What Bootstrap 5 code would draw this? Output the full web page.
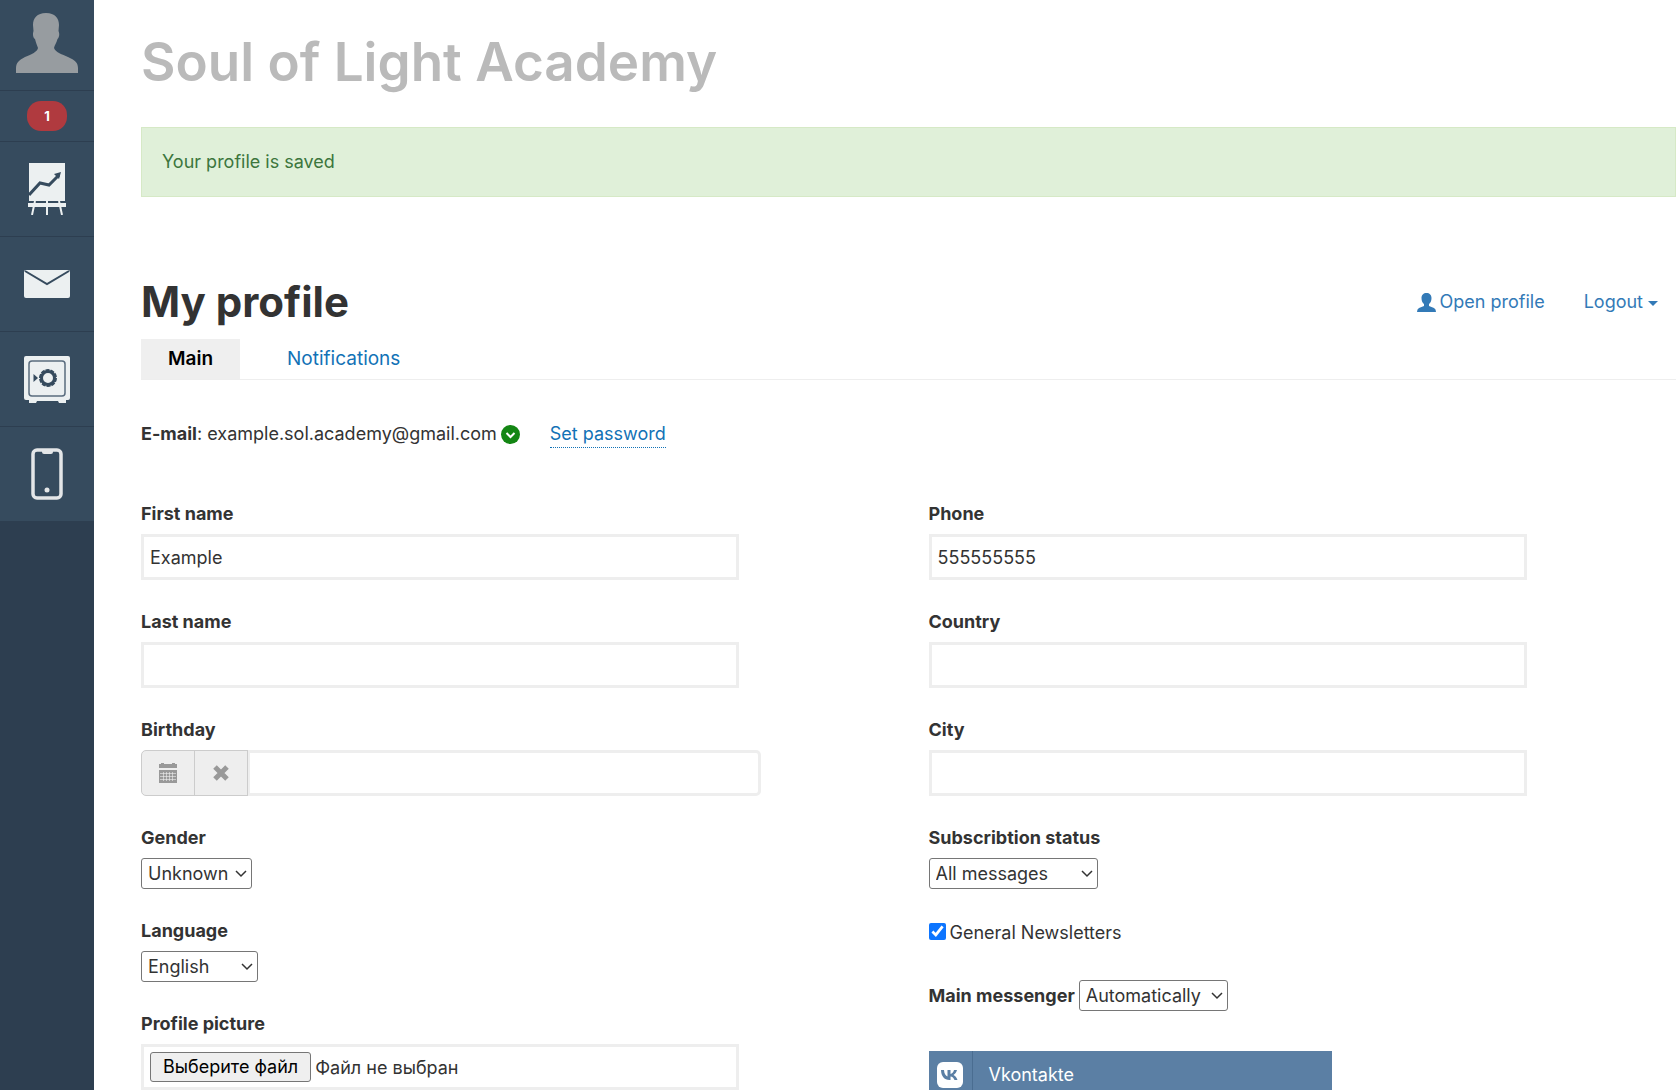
<!DOCTYPE html>
<html lang="en">
<head>
<meta charset="utf-8">
<meta name="viewport" content="width=device-width, initial-scale=1">
<title>My profile</title>
<link href="https://cdn.jsdelivr.net/npm/bootstrap@5.3.0/dist/css/bootstrap.min.css" rel="stylesheet">
<style>
body { font-family: Inter, "Open Sans", sans-serif; font-size: 18px; line-height: 28px; color: #333; }
a { text-decoration: none; color: #1272b6; }
.side { width: 94px; background: #2d3e50; }
.side-item { height: 95px; background: #364b5e; border-bottom: 1px solid #2d3e50; }
.side-avatar { height: 91px; padding-bottom: 4px; }
.side-count { height: 51px; }
.count-pill { width: 40px; height: 30px; border-radius: 14px; background: #b03a3f; font-size: 13px; }
.content-pane { padding: 0 4px 0 47px; overflow-x: hidden; overflow-y: auto; scrollbar-width: none; }
.brand { font-size: 53px; line-height: 66px; font-weight: 600; color: #bababa; margin: 29px 0 32px; }
.notice { background: #e0f0d9; border: 1px solid #d6e9c6; border-radius: 0; color: #3c763d; padding: 20px; margin-bottom: 75px; }
.page-title { font-size: 42px; line-height: 60px; font-weight: 700; }
.user-links { gap: 39px; padding-right: 18px; }
.user-links a { color: #337ab7; }
.user-links .dropdown-toggle::after { border-width: 5px 5px 0; margin-left: 5px; vertical-align: 2px; }
.profile-tabs { border-bottom: 1px solid #eee; margin-top: 7px; gap: 20px; }
.profile-tabs .nav-link { padding: 6px 27px; color: #1272b6; border-radius: 0; font-size: 19px; }
.profile-tabs .nav-link.active { background: #efefef; color: #000; font-weight: 600; }
.mail-line { margin: 40px 0 52px; }
.pass-link { border-bottom: 1px dotted #1272b6; margin-left: 30px; line-height: 26px; }
.fields { --bs-gutter-x: 40px; }
.field { margin-bottom: 28px; }
.cap { display: block; font-weight: 700; margin-bottom: 6px; }
.form-control { width: 80%; height: 46px; border: 3px solid #eee; border-radius: 0; padding: 6px; font-size: 18px; color: #333; }
.birth { width: 83%; }
.birth .form-control { width: auto; border-radius: 0 5px 5px 0; }
.birth .btn { width: 54px; padding: 0; border: 1px solid #ccc; background: #eee; color: #999; border-radius: 5px 0 0 5px; z-index: 6; }
.pick { appearance: none; height: 31px; border: 1px solid #767676; border-radius: 3px; color: #333; padding: 0 6px;
  background: #fff url("data:image/svg+xml,%3Csvg xmlns='http://www.w3.org/2000/svg' width='12' height='8'%3E%3Cpath d='M1 1l5 5 5-5' fill='none' stroke='%23333' stroke-width='1.500'/%3E%3C/svg%3E") no-repeat right 4px center; }
.pick-s { width: 111px; } .pick-m { width: 117px; } .pick-l { width: 169px; } .pick-a { width: 149px; }
.file-btn { height: 30px; border: 1px solid #767676; border-radius: 3px; background: #efefef; color: #000; font-size: 18px; line-height: 26px; padding: 0 12px; }
.tick { width: 17px; height: 17px; margin: 0 4px 4px 0; accent-color: #0d75ff; }
.news-row { padding-top: 2px; margin-bottom: 33px; }
.vk { width: 54%; height: 48px; background: #5b7fa4; color: #fff; }
.vk:hover { color: #fff; }
.vk-mark { width: 44px; border-right: 1px solid #4a6d91; }
</style>
<script src="https://cdn.jsdelivr.net/npm/bootstrap@5.3.0/dist/js/bootstrap.bundle.min.js"></script>
</head>
<body>
<div class="d-flex vh-100 overflow-hidden">
  <nav class="side flex-shrink-0 d-flex flex-column" aria-label="Sections">
    <a href="#" class="side-item side-avatar d-flex align-items-end justify-content-center" aria-label="Profile">
      <svg width="62" height="73" viewBox="0 0 62 73"><path fill="#979ca0" d="M30 0c9 0 13 5 13 12l-.5 6c1.500 3 .5 7-1 8-1 4-3 6-3.500 9 2 5 8 6 14 9 7 3 10 6 10 11v5H0v-5c0-5 3-8 9-11 7-3 12-5 13-9-1-3-2-5-3-9-2-1-2.500-5-1.500-8L17 12C17 5 21 0 30 0z"/></svg>
    </a>
    <a href="#" class="side-item side-count d-flex align-items-center justify-content-center"><span class="count-pill d-flex align-items-center justify-content-center text-white fw-bold">1</span></a>
    <a href="#" class="side-item d-flex align-items-center justify-content-center" aria-label="Training">
      <svg width="38" height="52" viewBox="0 0 38 52"><path fill="#ecf0f1" d="M1 0h36v38H1z"/><path fill="none" stroke="#364b5e" stroke-width="3" d="M1 32l11-12 9 2 10-10"/><path fill="#364b5e" d="M26 11l7-2-2 7z"/><path fill="#ecf0f1" d="M0 40h38v4H0z"/><path stroke="#364b5e" d="M0 39.500h38"/><path stroke="#ecf0f1" stroke-width="2" d="M7 38L4 52M19 38v14M31 38l3 14"/></svg>
    </a>
    <a href="#" class="side-item d-flex align-items-center justify-content-center" aria-label="Messages">
      <svg width="46" height="28" viewBox="0 0 46 28"><rect width="46" height="28" rx="2" fill="#ecf0f1"/><path fill="none" stroke="#364b5e" stroke-width="2" d="M1 1l22 13L45 1"/></svg>
    </a>
    <a href="#" class="side-item d-flex align-items-center justify-content-center" aria-label="Purchases">
      <svg width="46" height="47" viewBox="0 0 46 47"><path fill="#ecf0f1" d="M2 0h42q2 0 2 2v40q0 2-2 2h-2v3h-7l-1-2H13l-1 2H5v-3H2q-2 0-2-2V2q0-2 2-2z"/><rect x="5" y="5" width="36" height="35" rx="3" fill="none" stroke="#5a6c7e" stroke-width="1.500"/><circle cx="24" cy="22" r="6.500" fill="none" stroke="#364b5e" stroke-width="3"/><circle cx="24" cy="22" r="8" fill="none" stroke="#364b5e" stroke-width="2" stroke-dasharray="4 1"/><path fill="#364b5e" d="M9.500 18l4.500 4-4.500 4z"/></svg>
    </a>
    <a href="#" class="side-item d-flex align-items-center justify-content-center" aria-label="Mobile app">
      <svg width="32" height="52" viewBox="0 0 32 52"><rect x="2" y="2" width="28" height="48" rx="4" fill="none" stroke="#e4e6e8" stroke-width="3.500"/><path fill="#e4e6e8" d="M11 2h11v2q0 2-2 2h-7q-2 0-2-2z"/><circle cx="16" cy="42" r="2.500" fill="#e4e6e8"/></svg>
    </a>
  </nav>

  <main class="content-pane flex-grow-1">
    <h1 class="brand">Soul of Light Academy</h1>
    <div class="alert notice" role="status">Your profile is saved</div>

    <header class="d-flex justify-content-between align-items-center">
      <h2 class="page-title mb-0">My profile</h2>
      <div class="user-links d-flex">
        <a href="#" class="d-flex align-items-center gap-1"><svg width="19" height="19" viewBox="0 0 19 19" aria-hidden="true"><path fill="currentColor" d="M9.500 0c3 0 5 2 5 5s-1 5-2.500 6v2l5 2q2 1 2 4H0q0-3 2-4l5-2v-2C5.500 10 4.500 8 4.500 5s2-5 5-5z"/></svg>Open profile</a>
        <div class="dropdown">
          <a href="#" class="dropdown-toggle" data-bs-toggle="dropdown">Logout</a>
          <ul class="dropdown-menu dropdown-menu-end"></ul>
        </div>
      </div>
    </header>
    <nav class="nav profile-tabs">
      <a class="nav-link active" href="#">Main</a>
      <a class="nav-link" href="#">Notifications</a>
    </nav>

    <div class="mail-line d-flex align-items-center">
      <div><strong>E-mail</strong>: example.sol.academy@gmail.com</div>
      <svg class="ms-1" width="19" height="19" viewBox="0 0 19 19" aria-hidden="true"><circle cx="9.500" cy="9.500" r="9.500" fill="#138613"/><path d="M5.500 8l4 4 4-4" fill="none" stroke="#fff" stroke-width="2"/></svg>
      <a href="#" class="pass-link">Set password</a>
    </div>

    <form class="row fields">
      <div class="col-6">
        <div class="field"><label class="cap" for="first">First name</label><input class="form-control" id="first" value="Example"></div>
        <div class="field"><label class="cap" for="last">Last name</label><input class="form-control" id="last"></div>
        <div class="field">
          <label class="cap" for="birth">Birthday</label>
          <div class="input-group birth">
            <button type="button" class="btn" aria-label="Open calendar"><svg class="d-block mx-auto" width="18" height="20" viewBox="0 0 18 20"><path fill="currentColor" d="M0 1h2V0h3v1h8V0h3v1h2v4H0zM0 7h18v13H0z"/><path stroke="#eee" stroke-opacity=".6" d="M1 10.500h16M1 13.500h16M1 16.500h16M4.500 9v9M7.500 9v9M10.500 9v9M13.500 9v9"/></svg></button>
            <button type="button" class="btn" aria-label="Clear date"><svg class="d-block mx-auto" width="16" height="16" viewBox="0 0 16 16"><path stroke="currentColor" stroke-width="5" d="M2 2l12 12M14 2L2 14"/></svg></button>
            <input class="form-control" id="birth">
          </div>
        </div>
        <div class="field"><label class="cap" for="gender">Gender</label><select class="pick pick-s d-block" id="gender"><option>Unknown</option></select></div>
        <div class="field"><label class="cap" for="lang">Language</label><select class="pick pick-m d-block" id="lang"><option>English</option></select></div>
        <div class="field">
          <label class="cap" for="photo">Profile picture</label>
          <div class="form-control d-flex align-items-center">
            <button type="button" class="file-btn me-1" onclick="document.getElementById('photo').click()">Выберите файл</button>
            <span>Файл не выбран</span>
            <input type="file" id="photo" class="d-none">
          </div>
        </div>
      </div>
      <div class="col-6">
        <div class="field"><label class="cap" for="phone">Phone</label><input class="form-control" id="phone" value="555555555"></div>
        <div class="field"><label class="cap" for="country">Country</label><input class="form-control" id="country"></div>
        <div class="field"><label class="cap" for="city">City</label><input class="form-control" id="city"></div>
        <div class="field"><label class="cap" for="sub">Subscribtion status</label><select class="pick pick-l d-block" id="sub"><option>All messages</option></select></div>
        <div class="news-row d-flex align-items-center"><input type="checkbox" class="tick" id="news" checked><label for="news">General Newsletters</label></div>
        <div class="d-flex align-items-center mb-4 pb-3"><label class="cap mb-0 me-1" for="msg">Main messenger</label><select class="pick pick-a" id="msg"><option>Automatically</option></select></div>
        <a href="#" class="vk d-flex align-items-center">
          <span class="vk-mark h-100 d-flex align-items-center justify-content-center"><svg width="26" height="26" viewBox="0 0 26 26" aria-hidden="true"><rect width="26" height="26" rx="6" fill="#fff"/><path fill="#5b7fa4" d="M4 8h3c.2 4 2 6 3.500 6.500V8h3v4c1.500-.3 3-2 3.500-4h3c-.5 2.300-2 4-3.500 5 1.500.8 3.200 2.300 4 5h-3c-.7-2-2.200-3.300-4-3.500V18C7.500 18.500 4.200 14.500 4 8z"/></svg></span>
          <span class="ps-3">Vkontakte</span>
        </a>
      </div>
    </form>
  </main>
</div>
</body>
</html>
